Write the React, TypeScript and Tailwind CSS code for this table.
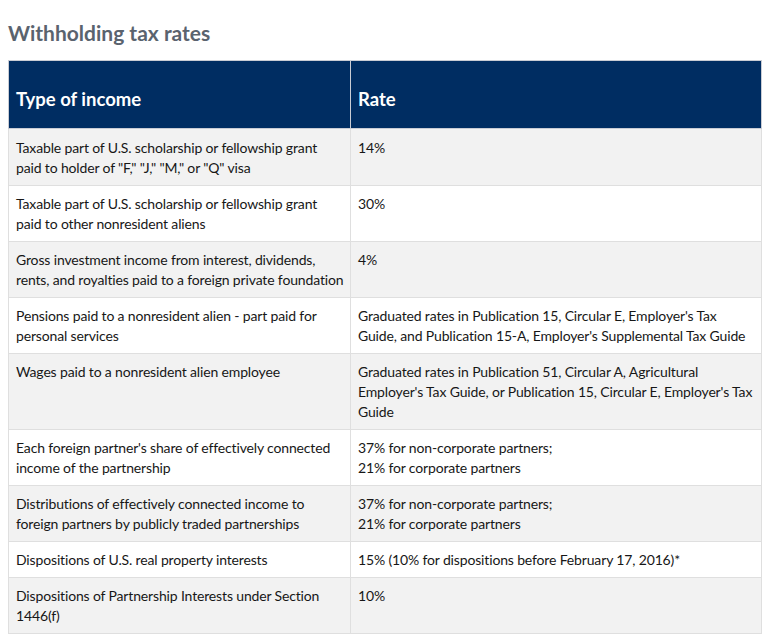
const rows: { income: string[]; rate: string[] }[] = [
  {
    income: ['Taxable part of U.S. scholarship or fellowship grant', 'paid to holder of "F," "J," "M," or "Q" visa'],
    rate: ['14%'],
  },
  {
    income: ['Taxable part of U.S. scholarship or fellowship grant', 'paid to other nonresident aliens'],
    rate: ['30%'],
  },
  {
    income: ['Gross investment income from interest, dividends,', 'rents, and royalties paid to a foreign private foundation'],
    rate: ['4%'],
  },
  {
    income: ['Pensions paid to a nonresident alien - part paid for', 'personal services'],
    rate: [
      "Graduated rates in Publication 15, Circular E, Employer's Tax",
      "Guide, and Publication 15-A, Employer's Supplemental Tax Guide",
    ],
  },
  {
    income: ['Wages paid to a nonresident alien employee'],
    rate: [
      'Graduated rates in Publication 51, Circular A, Agricultural',
      "Employer's Tax Guide, or Publication 15, Circular E, Employer's Tax",
      'Guide',
    ],
  },
  {
    income: ["Each foreign partner's share of effectively connected", 'income of the partnership'],
    rate: ['37% for non-corporate partners;', '21% for corporate partners'],
  },
  {
    income: ['Distributions of effectively connected income to', 'foreign partners by publicly traded partnerships'],
    rate: ['37% for non-corporate partners;', '21% for corporate partners'],
  },
  {
    income: ['Dispositions of U.S. real property interests'],
    rate: ['15% (10% for dispositions before February 17, 2016)*'],
  },
  {
    income: ['Dispositions of Partnership Interests under Section', '1446(f)'],
    rate: ['10%'],
  },
];

export default function App() {
  return (
    <div className="bg-white min-h-screen px-2 pt-[19px] font-['Lato',sans-serif]">
      <h2 className="text-[21px] leading-7 font-bold text-[#5a636e] mb-[13px]">Withholding tax rates</h2>
      <table className="w-[754px] table-fixed border-collapse text-[14px] leading-5 tracking-[-0.15px] text-[#171717]">
        <colgroup>
          <col className="w-[342px]" />
          <col />
        </colgroup>
        <thead>
          <tr className="bg-[#002d62] text-white">
            <th className="h-[68px] pl-[7px] pr-2 pt-2 text-left text-[18.5px] tracking-normal font-bold border border-[#c9ccd4]">
              Type of income
            </th>
            <th className="h-[68px] pl-[7px] pr-2 pt-2 text-left text-[18.5px] tracking-normal font-bold border border-[#c9ccd4]">
              Rate
            </th>
          </tr>
        </thead>
        <tbody>
          {rows.map((row, i) => (
            <tr key={i} className={i % 2 === 0 ? 'bg-[#f2f2f2]' : 'bg-white'}>
              <td
                className={`align-top pl-[7px] pr-2 pb-[7px] border border-[#dfdfdf] whitespace-nowrap ${
                  i === 0 ? 'pt-[9px]' : 'pt-2'
                }`}
              >
                {row.income.map((line, j) => (
                  <div key={j}>{line}</div>
                ))}
              </td>
              <td
                className={`align-top pl-[7px] pr-2 pb-[7px] border border-[#dfdfdf] whitespace-nowrap ${
                  i === 0 ? 'pt-[9px]' : 'pt-2'
                }`}
              >
                {row.rate.map((line, j) => (
                  <div key={j}>{line}</div>
                ))}
              </td>
            </tr>
          ))}
        </tbody>
      </table>
    </div>
  );
}
